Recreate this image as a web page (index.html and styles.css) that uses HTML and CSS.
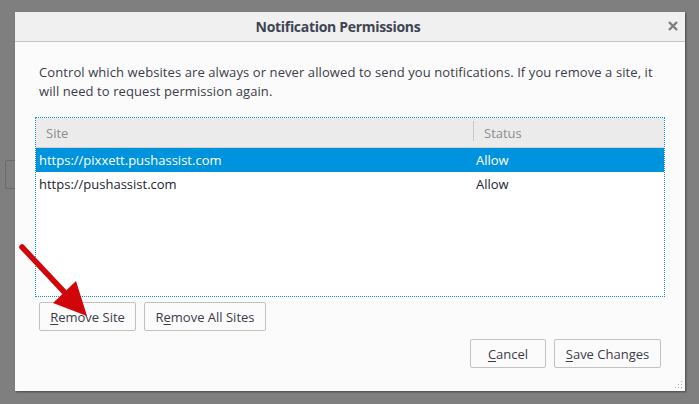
FILE: index.html
```html
<!DOCTYPE html>
<html>
<head>
<meta charset="utf-8">
<link rel="stylesheet" href="styles.css">
</head>
<body>
<div class="behind"></div>
<div class="dialog">
  <div class="titlebar">
    <span class="title">Notification Permissions</span>
    <span class="close">
      <svg width="10" height="10" viewBox="0 0 10 10"><path d="M1 1L9 9M9 1L1 9" stroke="#7a7f86" stroke-width="2.4"/></svg>
    </span>
  </div>
  <div class="content">
    <p class="desc">Control which websites are always or never allowed to send you notifications. If you remove a site, it will need to request permission again.</p>
    <div class="list">
      <div class="head">
        <div class="col site">Site</div>
        <div class="col status"><span class="sep"></span>Status</div>
      </div>
      <div class="row selected"><div class="col site">https://pixxett.pushassist.com</div><div class="col status">Allow</div></div>
      <div class="row"><div class="col site">https://pushassist.com</div><div class="col status">Allow</div></div>
    </div>
    <div class="actions">
      <button class="btn btn-rs"><u>R</u>emove Site</button>
      <button class="btn btn-ras">R<u>e</u>move All Sites</button>
    </div>
    <div class="footer">
      <button class="btn btn-cancel"><u>C</u>ancel</button>
      <button class="btn btn-save"><u>S</u>ave Changes</button>
    </div>
  </div>
  <svg class="grip" width="10" height="10" viewBox="0 0 10 10">
    <rect x="7" y="1" width="1" height="1" fill="#aaa"/>
    <rect x="4" y="4" width="1" height="1" fill="#aaa"/>
    <rect x="7" y="4" width="1" height="1" fill="#aaa"/>
    <rect x="1" y="7" width="1" height="1" fill="#aaa"/>
    <rect x="4" y="7" width="1" height="1" fill="#aaa"/>
    <rect x="7" y="7" width="1" height="1" fill="#aaa"/>
  </svg>
</div>
<svg class="arrow" width="100" height="90" viewBox="0 0 100 90">
  <line x1="22" y1="12" x2="67" y2="60" stroke="#d0060b" stroke-width="5.5" stroke-linecap="round"/>
  <polygon points="76,46 53,68 87,81" fill="#d0060b"/>
</svg>
</body>
</html>
```
FILE: styles.css
```css
html, body {
  margin: 0;
  padding: 0;
}
body {
  background: #7f7f7f;
  width: 699px;
  height: 404px;
  overflow: hidden;
  font-family: "Open Sans", "Noto Sans", sans-serif;
  font-size: 13px;
  color: #3b3b4a;
  position: relative;
  padding: 12px 0 0 15px;
  box-sizing: border-box;
}
.behind {
  position: absolute;
  left: 5px;
  top: 160px;
  width: 20px;
  height: 29px;
  border: 1px solid #6a6a6a;
  border-radius: 2px;
  box-sizing: border-box;
}
.dialog {
  position: relative;
  width: 670px;
  height: 379px;
  background: #fbfbfb;
  box-shadow: 1px 1px 2px rgba(0,0,0,0.45);
  display: flex;
  flex-direction: column;
}
.titlebar {
  height: 29px;
  background: #f0f0f0;
  border-bottom: 1px solid #c4c4c4;
  display: flex;
  align-items: center;
  justify-content: center;
  padding-right: 24px;
  position: relative;
}
.title {
  font-weight: bold;
  font-size: 14px;
  color: #3e4451;
  letter-spacing: -0.3px;
}
.close {
  position: absolute;
  right: 7px;
  top: 9px;
  display: flex;
}
.content {
  flex: 1;
  padding: 0 20px 0 20px;
  display: flex;
  flex-direction: column;
}
.desc {
  margin: 21px 0 0 4px;
  line-height: 19px;
  width: 630px;
  letter-spacing: 0.09px;
}
.list {
  margin-top: 16px;
  height: 180px;
  width: 630px;
  box-sizing: border-box;
  border: 1px dotted #0e8fd6;
  background: #fff;
  display: flex;
  flex-direction: column;
}
.head {
  height: 29px;
  background: #ebebeb;
  border-bottom: 1px solid #d0d0d0;
  display: flex;
  align-items: center;
  color: #8d8d8d;
}
.head .site {
  padding-left: 10px;
}
.col.site {
  width: 437px;
  box-sizing: border-box;
}
.head .status {
  position: relative;
  padding-left: 11px;
}
.sep {
  position: absolute;
  left: 0;
  top: -3px;
  width: 1px;
  height: 20px;
  background: #c9c9c9;
}
.row {
  height: 24px;
  display: flex;
  align-items: center;
  color: #222230;
}
.row .site {
  padding-left: 3px;
}
.row .status {
  padding-left: 3px;
}
.row.selected {
  background: #0093dd;
  color: #fff;
}
.actions {
  margin-top: 5px;
  margin-left: 4px;
  display: flex;
  gap: 8px;
}
.btn {
  font-family: inherit;
  font-size: 13px;
  color: #3b3b4a;
  background: #fbfbfb;
  border: 1px solid #c2c2c2;
  border-radius: 2px;
  height: 29px;
  padding: 0;
  margin: 0;
  box-sizing: border-box;
}
.btn u {
  text-decoration-thickness: 1px;
  text-underline-offset: 2px;
}
.btn-rs { width: 97px; }
.btn-ras { width: 122px; }
.footer {
  margin-top: 8px;
  margin-right: 4px;
  display: flex;
  justify-content: flex-end;
  gap: 8px;
}
.btn-cancel { width: 76px; }
.btn-save { width: 107px; }
.grip {
  position: absolute;
  right: 1px;
  bottom: 1px;
}
.arrow {
  position: absolute;
  left: 0;
  top: 235px;
}
```
